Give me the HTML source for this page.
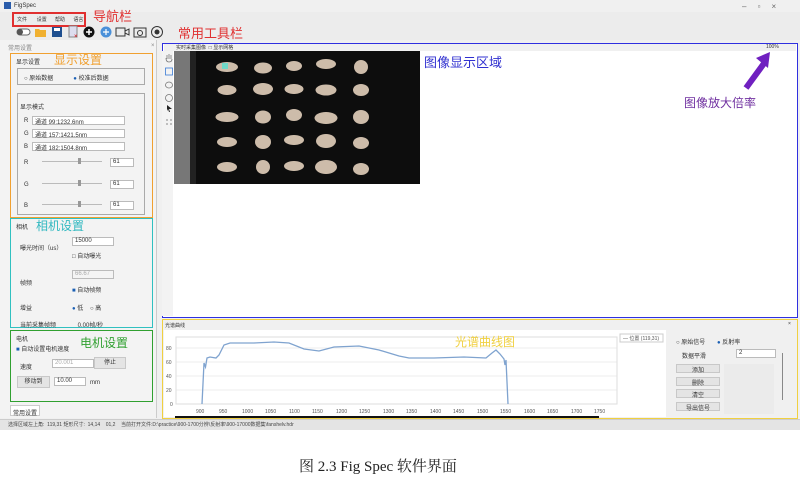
<!DOCTYPE html>
<html><head><meta charset="utf-8"><style>
*{margin:0;padding:0;box-sizing:border-box}
body{width:800px;height:482px;background:#fff;position:relative;overflow:hidden;font-family:"Liberation Sans","Noto Sans CJK SC",sans-serif;font-size:6px;color:#333}
.a{position:absolute}
.t{position:absolute;white-space:nowrap;font-size:6px;color:#333}
.btn{position:absolute;background:#e4e4e4;border:1px solid #c8c8c8;font-size:6px;text-align:center;color:#333}
.inp{position:absolute;background:#fff;border:1px solid #bbb;font-size:6px;padding-left:2px}
.lab{position:absolute;white-space:nowrap;font-family:"Noto Sans CJK SC",sans-serif}
</style></head><body>
<div class="a" style="left:0;top:0;width:800px;height:430px;background:#f0f0f0"></div>
<div class="a" style="left:4px;top:2px;width:7px;height:7px;background:#2a5caa"></div>
<div class="t" style="left:14px;top:3px;font-size:6px">FigSpec</div>
<div class="t" style="left:742px;top:2px;font-size:8px;color:#666">–&nbsp;&nbsp;&nbsp;&nbsp;&nbsp;▫&nbsp;&nbsp;&nbsp;&nbsp;&nbsp;×</div>
<div class="a" style="left:0;top:12px;width:800px;height:28px;background:#ececec"></div>
<div class="a" style="left:12px;top:12px;width:74px;height:15px;border:2px solid #e03030"></div>
<div class="t" style="left:17px;top:16px;font-size:5px">文件&nbsp;&nbsp;&nbsp;&nbsp;&nbsp;&nbsp;&nbsp;设置&nbsp;&nbsp;&nbsp;&nbsp;&nbsp;&nbsp;帮助&nbsp;&nbsp;&nbsp;&nbsp;&nbsp;&nbsp;语言</div>
<div class="lab" style="left:93px;top:6px;font-size:13px;color:#e03030">导航栏</div>
<div class="lab" style="left:178px;top:23px;font-size:13px;color:#e03030">常用工具栏</div>
<svg class="a" style="left:8px;top:25px" width="170" height="14">
<rect x="9" y="4" width="13" height="6" rx="3" fill="#fff" stroke="#666"/><circle cx="12" cy="7" r="3" fill="#555"/>
<path d="M27 4h4l1 1h6v7h-11z" fill="#f0b030"/>
<rect x="44" y="2" width="10" height="10" fill="#1e4f8f"/><rect x="46" y="3" width="6" height="3" fill="#fff"/>
<rect x="61" y="1" width="8" height="11" fill="#dde" stroke="#888"/><text x="66" y="13" font-size="6" fill="#d00">×</text>
<circle cx="81" cy="7" r="5.5" fill="#111"/><path d="M78 7h6M81 4v6" stroke="#fff" stroke-width="1.5"/>
<circle cx="98" cy="7" r="5.5" fill="#4a90d9"/><path d="M95 7h6M98 4v6" stroke="#fff" stroke-width="1.2"/>
<rect x="108" y="3" width="9" height="8" fill="none" stroke="#333"/><path d="M117 6l4-2v6l-4-2" fill="none" stroke="#333"/>
<rect x="126" y="3" width="12" height="9" fill="none" stroke="#333"/><circle cx="132" cy="8" r="2.5" fill="none" stroke="#333"/>
<circle cx="149" cy="7" r="5.5" fill="none" stroke="#333"/><circle cx="149" cy="7" r="2.5" fill="#333"/>
</svg>
<div class="a" style="left:0;top:40px;width:157px;height:378px;background:#f3f3f3;border-right:1px solid #ccc"></div>
<div class="t" style="left:8px;top:43px;color:#888">常用设置</div><div class="t" style="left:151px;top:43px;color:#888">×</div>
<div class="a" style="left:10px;top:53px;width:143px;height:165px;border:1.5px solid #f0a030"></div>
<div class="t" style="left:16px;top:57px">显示设置</div>
<div class="lab" style="left:54px;top:51px;font-size:12px;color:#f0a030">显示设置</div>
<div class="a" style="left:17px;top:68px;width:128px;height:17px;border:1px solid #aaa"></div>
<div class="t" style="left:24px;top:73px">○ 原始数据&nbsp;&nbsp;&nbsp;&nbsp;&nbsp;&nbsp;&nbsp;&nbsp;&nbsp;&nbsp;&nbsp;&nbsp;<span style="color:#1a5fb4">●</span> 校准后数据</div>
<div class="a" style="left:17px;top:93px;width:128px;height:122px;border:1px solid #aaa"></div>
<div class="t" style="left:20px;top:102px">显示模式</div>
<div class="t" style="left:24px;top:118px">R</div><div class="inp" style="left:32px;top:116px;width:93px;height:9px">通道 99:1232.6nm</div>
<div class="t" style="left:24px;top:131px">G</div><div class="inp" style="left:32px;top:129px;width:93px;height:9px">通道 157:1421.5nm</div>
<div class="t" style="left:24px;top:144px">B</div><div class="inp" style="left:32px;top:142px;width:93px;height:9px">通道 182:1504.8nm</div>
<div class="t" style="left:24px;top:160px">R</div><div class="t" style="left:24px;top:182px">G</div><div class="t" style="left:24px;top:203px">B</div>
<div class="a" style="left:42px;top:161px;width:60px;height:1px;background:#bbb"></div><div class="a" style="left:78px;top:158px;width:3px;height:6px;background:#999"></div>
<div class="a" style="left:42px;top:183px;width:60px;height:1px;background:#bbb"></div><div class="a" style="left:78px;top:180px;width:3px;height:6px;background:#999"></div>
<div class="a" style="left:42px;top:204px;width:60px;height:1px;background:#bbb"></div><div class="a" style="left:78px;top:201px;width:3px;height:6px;background:#999"></div>
<div class="inp" style="left:110px;top:158px;width:24px;height:9px">61</div>
<div class="inp" style="left:110px;top:180px;width:24px;height:9px">61</div>
<div class="inp" style="left:110px;top:201px;width:24px;height:9px">61</div>
<div class="a" style="left:10px;top:218px;width:143px;height:110px;border:1.5px solid #30c0c0"></div>
<div class="t" style="left:16px;top:222px">相机</div>
<div class="lab" style="left:36px;top:217px;font-size:12px;color:#30b8c0">相机设置</div>
<div class="t" style="left:20px;top:243px">曝光时间（us）</div>
<div class="inp" style="left:72px;top:237px;width:42px;height:9px">15000</div>
<div class="t" style="left:72px;top:251px">□ 自动曝光</div>
<div class="inp" style="left:72px;top:270px;width:42px;height:9px;color:#aaa;background:#f4f4f4">66.67</div>
<div class="t" style="left:20px;top:278px">帧频</div>
<div class="t" style="left:72px;top:285px"><span style="color:#1a5fb4">■</span> 自动帧频</div>
<div class="t" style="left:20px;top:303px">增益</div>
<div class="t" style="left:72px;top:303px"><span style="color:#1a5fb4">●</span> 低&nbsp;&nbsp;&nbsp;&nbsp;○ 高</div>
<div class="t" style="left:20px;top:320px">当前采集帧频&nbsp;&nbsp;&nbsp;&nbsp;&nbsp;&nbsp;&nbsp;&nbsp;&nbsp;&nbsp;&nbsp;&nbsp;&nbsp;0.00帧/秒</div>
<div class="a" style="left:10px;top:330px;width:143px;height:72px;border:1.5px solid #30a030"></div>
<div class="t" style="left:16px;top:334px">电机</div>
<div class="lab" style="left:80px;top:334px;font-size:12px;color:#30a030">电机设置</div>
<div class="t" style="left:16px;top:344px"><span style="color:#1a5fb4">■</span> 自动设置电机速度</div>
<div class="t" style="left:20px;top:362px">速度</div>
<div class="inp" style="left:52px;top:359px;width:42px;height:9px;color:#aaa">20.001</div>
<div class="t" style="left:97px;top:362px">mm/s</div>
<div class="btn" style="left:94px;top:357px;width:32px;height:12px;line-height:11px">停止</div>
<div class="btn" style="left:17px;top:376px;width:33px;height:12px;line-height:11px">移动到</div>
<div class="inp" style="left:54px;top:377px;width:32px;height:9px">10.00</div>
<div class="t" style="left:90px;top:380px">mm</div>
<div class="a" style="left:10px;top:405px;width:30px;height:11px;background:#fff;border:1px solid #ccc"></div>
<div class="t" style="left:13px;top:408px">常用设置</div>
<div class="a" style="left:162px;top:43px;width:636px;height:275px;border:1.5px solid #3030e0;background:#fff"></div>
<div class="a" style="left:164px;top:44px;width:632px;height:7px;background:#f0f0f0"></div>
<div class="t" style="left:176px;top:44px;font-size:5px">实时采集图像&nbsp;&nbsp;□ 显示网格</div>
<div class="t" style="left:766px;top:44px;font-size:5px">100%</div>
<div class="a" style="left:162px;top:51px;width:11px;height:265px;background:#f3f3f3"></div>
<svg class="a" style="left:164px;top:52px" width="10" height="75"><g fill="none" stroke="#777" stroke-width="0.8"><path d="M3 7v-4M5 7v-5M7 7v-4M2 6q0 4 3 4t3-3"/><rect x="1.5" y="16" width="7" height="7" stroke="#3a7bd5"/><ellipse cx="5" cy="33" rx="3.5" ry="3"/><circle cx="5" cy="46" r="3.5"/></g><path d="M3 53l5 4h-3l1 3-1 0-1-3-1 2z" fill="#222"/><path d="M2 68h2M6 68h2M2 72h2M6 72h2" stroke="#888"/></svg>
<svg class="a" style="left:174px;top:51px" width="246" height="133">
<rect width="246" height="133" fill="#0d0d0d"/><rect width="16" height="133" fill="#777"/><rect x="16" width="6" height="133" fill="#222"/>
<g fill="#cdbcaa">
<ellipse cx="53" cy="16" rx="11" ry="5"/><ellipse cx="89" cy="17" rx="9" ry="5.5"/><ellipse cx="120" cy="15" rx="8" ry="5"/><ellipse cx="152" cy="13" rx="10" ry="5"/><ellipse cx="187" cy="16" rx="7" ry="7"/>
<ellipse cx="53" cy="39" rx="9.5" ry="5"/><ellipse cx="89" cy="38" rx="10" ry="6"/><ellipse cx="120" cy="38" rx="9.5" ry="5"/><ellipse cx="152" cy="39" rx="10.5" ry="5.5"/><ellipse cx="187" cy="39" rx="8" ry="6"/>
<ellipse cx="53" cy="66" rx="11.5" ry="5"/><ellipse cx="89" cy="66" rx="8" ry="6.5"/><ellipse cx="120" cy="64" rx="8" ry="6"/><ellipse cx="152" cy="67" rx="11.5" ry="6"/><ellipse cx="187" cy="66" rx="8" ry="7"/>
<ellipse cx="53" cy="91" rx="10" ry="5"/><ellipse cx="89" cy="91" rx="8" ry="7"/><ellipse cx="120" cy="89" rx="10" ry="5"/><ellipse cx="152" cy="90" rx="10" ry="7"/><ellipse cx="187" cy="92" rx="8" ry="6"/>
<ellipse cx="53" cy="116" rx="10" ry="5"/><ellipse cx="89" cy="116" rx="7" ry="7"/><ellipse cx="120" cy="115" rx="10" ry="5"/><ellipse cx="152" cy="116" rx="11" ry="7"/><ellipse cx="187" cy="118" rx="8" ry="6"/>
</g><rect x="48" y="12" width="6" height="6" fill="#6fd8c8"/></svg>
<div class="lab" style="left:424px;top:52px;font-size:13px;color:#3030d0">图像显示区域</div>
<svg class="a" style="left:740px;top:48px" width="40" height="45"><path d="M6 40L25 14" stroke="#7020c0" stroke-width="6"/><path d="M16 10L30 4L28 20z" fill="#7020c0"/></svg>
<div class="lab" style="left:684px;top:94px;font-size:12px;color:#7030a0">图像放大倍率</div>
<div class="a" style="left:162px;top:319px;width:636px;height:100px;border:1.5px solid #f0d040;background:#f0f0f0"></div>
<div class="t" style="left:165px;top:322px;font-size:5px">光谱曲线</div><div class="t" style="left:788px;top:321px;font-size:5px">×</div>
<div class="a" style="left:164px;top:330px;width:502px;height:87px;background:#fff"></div>
<svg class="a" style="left:164px;top:330px" width="502" height="88" font-size="5" fill="#555">
<g stroke="#eee"><path d="M12 18h441M12 32h441M12 46h441M12 60h441"/></g>
<rect x="12" y="7" width="441" height="67" fill="none" stroke="#ddd"/>
<text x="2" y="20">80</text><text x="2" y="34">60</text><text x="2" y="48">40</text><text x="2" y="62">20</text><text x="6" y="76">0</text>
<g><text x="32" y="83">900</text><text x="55" y="83">950</text><text x="78" y="83">1000</text><text x="101" y="83">1050</text><text x="125" y="83">1100</text><text x="148" y="83">1150</text><text x="172" y="83">1200</text><text x="195" y="83">1250</text><text x="219" y="83">1300</text><text x="242" y="83">1350</text><text x="266" y="83">1400</text><text x="289" y="83">1450</text><text x="313" y="83">1500</text><text x="336" y="83">1550</text><text x="360" y="83">1600</text><text x="383" y="83">1650</text><text x="407" y="83">1700</text><text x="430" y="83">1750</text></g>
<path d="M38 74L40 33L41.5 37L43 28L46 27L52 28L55 25L60 15L66 13L90 13L110 12L125 13L140 19L155 21L170 17L195 16L215 20L235 26L245 28L270 28L300 27L322 28L328 23L332 20L336 24L340 29L341 35L342 30L344 74" fill="none" stroke="#7fa3cf" stroke-width="1.3"/>
<rect x="11" y="86" width="424" height="2" fill="#111"/>
<rect x="456" y="4" width="43" height="8" fill="#fff" stroke="#ccc"/><text x="459" y="10">— 位置 (119,31)</text>
</svg>
<div class="lab" style="left:455px;top:333px;font-size:12px;color:#f0d040">光谱曲线图</div>
<div class="t" style="left:676px;top:337px">○ 原始信号&nbsp;&nbsp;&nbsp;&nbsp;&nbsp;&nbsp;&nbsp;<span style="color:#1a5fb4">●</span> 反射率</div>
<div class="t" style="left:682px;top:351px">数据平滑</div>
<div class="inp" style="left:736px;top:349px;width:40px;height:9px">2</div>
<div class="btn" style="left:676px;top:364px;width:44px;height:9px">添加</div>
<div class="btn" style="left:676px;top:377px;width:44px;height:9px">删除</div>
<div class="btn" style="left:676px;top:389px;width:44px;height:9px">清空</div>
<div class="btn" style="left:676px;top:402px;width:44px;height:9px">导出信号</div>
<div class="a" style="left:724px;top:364px;width:50px;height:50px;background:#ebebeb"></div>
<div class="a" style="left:782px;top:353px;width:1px;height:47px;background:#888"></div>
<div class="a" style="left:0;top:419px;width:800px;height:11px;background:#e4e4e4;border-top:1px solid #ccc"></div>
<div class="t" style="left:8px;top:421px;font-size:5px;color:#444">选择区域左上角:&nbsp;&nbsp;119,31 矩形尺寸:&nbsp;&nbsp;14,14&nbsp;&nbsp;&nbsp;&nbsp;01,2&nbsp;&nbsp;&nbsp;&nbsp;当前打开文件:D:\practice\900-1700分辨\反射率\900-17000数据集\fanshelv.hdr</div>
<div class="t" style="left:299px;top:455px;font-size:15px;color:#222;font-family:'Liberation Serif','Noto Serif CJK SC',serif">图 2.3 Fig Spec 软件界面</div>
</body></html>
